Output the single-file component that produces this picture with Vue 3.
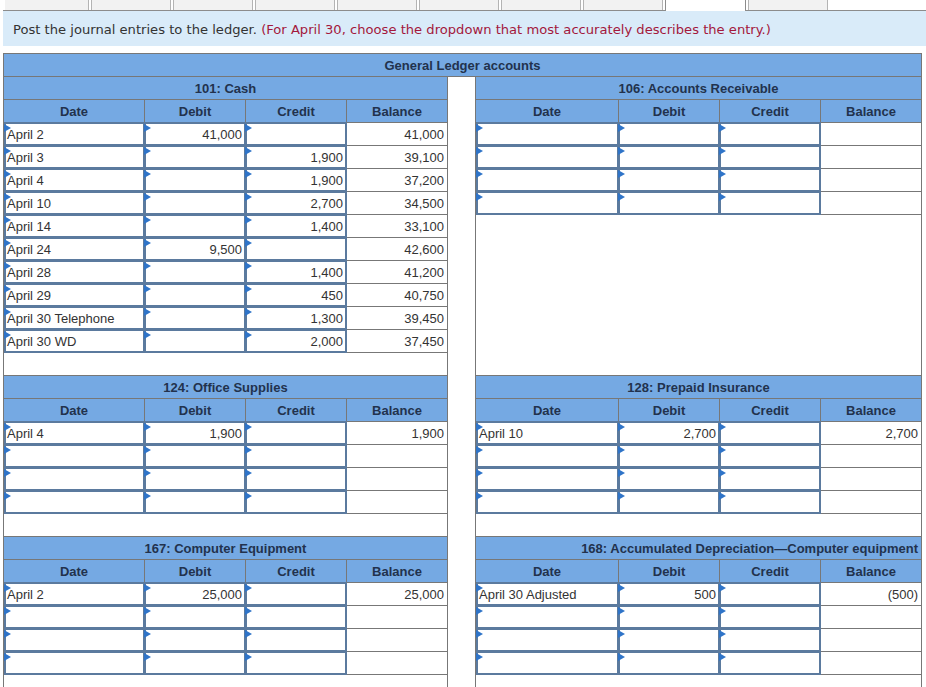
<script setup>
const tabs = [0, 1, 2, 3, 4, 5, 6, 7, 8, 9]
const activeTab = 8

const cashRows = [
  ['April 2', '41,000', '', '41,000'],
  ['April 3', '', '1,900', '39,100'],
  ['April 4', '', '1,900', '37,200'],
  ['April 10', '', '2,700', '34,500'],
  ['April 14', '', '1,400', '33,100'],
  ['April 24', '9,500', '', '42,600'],
  ['April 28', '', '1,400', '41,200'],
  ['April 29', '', '450', '40,750'],
  ['April 30 Telephone', '', '1,300', '39,450'],
  ['April 30 WD', '', '2,000', '37,450']
]
const empty = ['', '', '', '']

const accounts = [
  { name: '101: Cash', rows: cashRows },
  { name: '106: Accounts Receivable', rows: [empty, empty, empty, empty] },
  { name: '124: Office Supplies', rows: [['April 4', '1,900', '', '1,900'], empty, empty, empty] },
  { name: '128: Prepaid Insurance', rows: [['April 10', '2,700', '', '2,700'], empty, empty, empty] },
  { name: '167: Computer Equipment', rows: [['April 2', '25,000', '', '25,000'], empty, empty, empty] },
  { name: '168: Accumulated Depreciation—Computer equipment', wide: true, rows: [['April 30 Adjusted', '500', '', '(500)'], empty, empty, empty] }
]
</script>

<template>
  <div class="page">
    <div class="tabs">
      <div
        v-for="t in tabs"
        :key="t"
        class="tab"
        :class="{ active: t === activeTab }"
      ></div>
    </div>
    <p class="note">
      Post the journal entries to the ledger.
      <span class="hint">(For April 30, choose the dropdown that most accurately describes the entry.)</span>
    </p>
    <div class="ledger">
      <div class="ledger-title">General Ledger accounts</div>
      <div class="accounts">
        <section
          v-for="(a, i) in accounts"
          :key="a.name"
          class="account"
          :class="{ second: i % 2 === 1 }"
        >
          <div class="acct-title" :class="{ wide: a.wide }">{{ a.name }}</div>
          <div class="row head">
            <div class="hcell">Date</div>
            <div class="hcell">Debit</div>
            <div class="hcell">Credit</div>
            <div class="hcell">Balance</div>
          </div>
          <div v-for="(r, n) in a.rows" :key="n" class="row">
            <div class="cell"><div class="field left">{{ r[0] }}</div></div>
            <div class="cell"><div class="field amount">{{ r[1] }}</div></div>
            <div class="cell"><div class="field amount">{{ r[2] }}</div></div>
            <div class="balance">{{ r[3] }}</div>
          </div>
          <div class="blank"></div>
        </section>
      </div>
    </div>
  </div>
</template>

<style scoped>
.page {
  width: 926px;
  height: 687px;
  overflow: hidden;
  background: #fff;
}
.tabs {
  display: flex;
  gap: 2px;
  height: 11px;
  margin-left: 3px;
  padding-left: 2px;
  border-bottom: 1px solid #8c8c8c;
  box-sizing: border-box;
}
.tab {
  flex: 0 0 80.07px;
  height: 10px;
  box-sizing: border-box;
  background: #f2f2f2;
  border-right: 1px solid #b4b4b4;
  border-left: 1px solid #b4b4b4;
}
.tab:first-child {
  flex-basis: 84px;
  border-left: none;
}
.tab.active {
  height: 11px;
  background: #fff;
  border-color: #8c8c8c;
}
.note {
  margin: 0 0 7px 3px;
  height: 35px;
  padding-left: 10px;
  background: #d9ebf9;
  font: 13.12px/38px "DejaVu Sans", Verdana, sans-serif;
  color: #333;
  white-space: nowrap;
}
.hint {
  color: #a3183c;
}
.ledger {
  width: 919px;
  margin-left: 3px;
  box-sizing: border-box;
  border-top: 1px solid #777;
  border-left: 1px solid #777;
  font: 13px "Liberation Sans", Arial, sans-serif;
  color: #333;
}
.ledger-title,
.acct-title,
.hcell {
  background: #75a9e3;
  color: #22324d;
  font-weight: bold;
  font-size: 13px;
  line-height: 24px;
  text-align: center;
  box-sizing: border-box;
  border-bottom: 1px solid #777;
  border-right: 1px solid #777;
}
.ledger-title,
.acct-title {
  height: 23px;
}
.accounts {
  display: grid;
  grid-template-columns: 444px 447px;
  column-gap: 27px;
}
.account {
  display: flex;
  flex-direction: column;
}
.account.second {
  border-left: 1px solid #777;
}
.acct-title.wide {
  text-align: right;
  padding-right: 3px;
  white-space: nowrap;
}
.row {
  display: grid;
  grid-template-columns: 141px 101px 101px 101px;
  height: 23px;
}
.second .row {
  grid-template-columns: 143px 101px 101px 101px;
}
.hcell {
  height: 23px;
}
.cell {
  min-width: 0;
  height: 23px;
}
.field {
  position: relative;
  box-sizing: border-box;
  height: 24px;
  margin-top: -1px;
  padding-right: 2px;
  border: 2px solid #5b7a9e;
  background: #fff;
  line-height: 21px;
  text-align: right;
  white-space: nowrap;
}
.field.left {
  padding-left: 1px;
  text-align: left;
}
.field.amount {
  margin-left: -1px;
}
.field::before {
  content: "";
  position: absolute;
  left: -2px;
  top: 0;
  width: 0;
  height: 0;
  border-left: 7px solid #2f74c8;
  border-top: 4px solid transparent;
  border-bottom: 4px solid transparent;
}
.balance {
  box-sizing: border-box;
  height: 23px;
  padding-right: 3px;
  line-height: 23px;
  text-align: right;
  border-right: 1px solid #777;
  border-bottom: 1px solid #777;
}
.blank {
  flex: 1 0 23px;
  box-sizing: border-box;
  border-right: 1px solid #777;
  border-bottom: 1px solid #777;
}
</style>
